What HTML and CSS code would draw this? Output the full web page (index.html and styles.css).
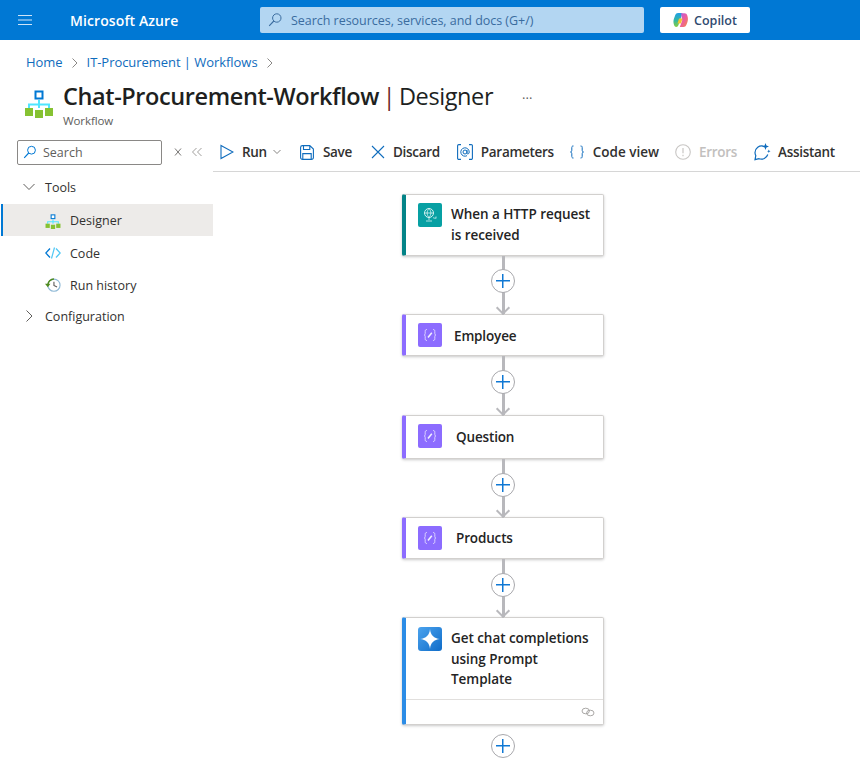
FILE: index.html
```html
<!DOCTYPE html>
<html lang="en">
<head>
<meta charset="utf-8">
<title>Chat-Procurement-Workflow | Designer</title>
<link rel="stylesheet" href="styles.css">
</head>
<body>
<svg class="defs" width="0" height="0" aria-hidden="true">
  <defs>
    <linearGradient id="cpA" x1="0" y1="0" x2="0" y2="1"><stop offset="0" stop-color="#1f9fe8"/><stop offset=".55" stop-color="#35b8a0"/><stop offset="1" stop-color="#8ccf3e"/></linearGradient>
    <linearGradient id="cpB" x1="0" y1="0" x2="1" y2="1"><stop offset="0" stop-color="#b45be6"/><stop offset=".5" stop-color="#ec5f9c"/><stop offset="1" stop-color="#f58a3c"/></linearGradient>
    <symbol id="varicon" viewBox="0 0 16 16">
      <path d="M5 2.500c-1.500 0-1.800.7-1.800 1.800v1.900C3.200 7.200 2.800 8 2 8c.8 0 1.200.8 1.200 1.800v1.900c0 1.100.3 1.800 1.800 1.800M11 2.500c1.500 0 1.800.7 1.800 1.800v1.900c0 1 .4 1.800 1.200 1.800-.8 0-1.200.8-1.200 1.800v1.900c0 1.100-.3 1.800-1.800 1.800" fill="none" stroke="#e2dbff" stroke-width=".9"/>
      <path d="M6 10.500 9.800 5.800" fill="none" stroke="#f4f1ff" stroke-width="1.500"/>
    </symbol>
    <symbol id="flowicon" viewBox="0 0 30 30">
      <path d="M15 12v8M5 20v-3.500h20V20" fill="none" stroke="#50e6ff" stroke-width="2"/>
      <rect x="11.500" y="3.500" width="7" height="7" fill="#fff" stroke="#0078d4" stroke-width="2"/>
      <rect x="1" y="20" width="8" height="8" fill="#86c232"/>
      <rect x="11" y="22" width="8" height="8" fill="#86c232"/>
      <rect x="21" y="20" width="8" height="8" fill="#86c232"/>
    </symbol>
  </defs>
</svg>
<header class="topbar">
  <svg class="hamburger" width="16" height="12" viewBox="0 0 16 12"><path d="M1 1.500h14M1 6h14M1 10.500h14" stroke="#cfe4f7" stroke-width="1.200" fill="none"/></svg>
  <div class="brand">Microsoft Azure</div>
  <div class="globalsearch">
    <svg width="16" height="16" viewBox="0 0 16 16"><circle cx="9.800" cy="6" r="4.200" fill="none" stroke="#3a6c9f" stroke-width="1"/><path d="M6.800 9 2.200 13.800" stroke="#3a6c9f" stroke-width="1.100"/></svg>
    <span>Search resources, services, and docs (G+/)</span>
  </div>
  <button class="copilot">
    <svg width="16" height="16" viewBox="0 0 16 16">
      <path d="M5 1h4.500L7 8.500 5.500 13c-.4 1.300-1.200 2-2.300 2C2 15 1.300 14 .9 12.500.3 10.500.3 8.500 1 6.500L2.300 3C2.800 1.700 3.700 1 5 1Z" fill="url(#cpA)"/>
      <path d="M8 1.200h3.500c1.500 0 2.300.8 2.800 2.200.8 2.500.9 4.700 0 7l-1 2.700c-.5 1.300-1.400 1.900-2.800 1.900H6.800L9.200 8.500Z" fill="url(#cpB)"/>
      <path d="M6 6.500h3.500L8 11.500H4.500Z" fill="#f4c430"/>
    </svg>
    <span>Copilot</span>
  </button>
</header>

<nav class="breadcrumb">
  <a>Home</a>
  <svg width="8" height="12" viewBox="0 0 8 12"><path d="M1.500 1.500 6 6l-4.500 4.500" fill="none" stroke="#8a8886" stroke-width="1"/></svg>
  <a>IT-Procurement | Workflows</a>
  <svg width="8" height="12" viewBox="0 0 8 12"><path d="M1.500 1.500 6 6l-4.500 4.500" fill="none" stroke="#8a8886" stroke-width="1"/></svg>
</nav>

<section class="pagehead">
  <svg class="pageicon" width="30" height="30"><use href="#flowicon"/></svg>
  <div class="pagetitles">
    <h1 class="title"><b>Chat-Procurement-Workflow</b> <i>|</i> Designer</h1>
    <div class="subtitle">Workflow</div>
  </div>
  <div class="more">···</div>
</section>

<div class="workspace">
  <aside class="sidebar">
    <div class="sidetools">
      <div class="sidesearch">
        <svg width="14" height="14" viewBox="0 0 14 14"><circle cx="8.500" cy="5.200" r="3.900" fill="none" stroke="#0078d4" stroke-width="1"/><path d="M5.700 8 1.200 12.800" stroke="#0078d4" stroke-width="1.100"/></svg>
        <span>Search</span>
      </div>
      <svg class="sideicon-x" width="10" height="10" viewBox="0 0 10 10"><path d="M2 1.500 8 8.500M8 1.500 2 8.500" stroke="#797775" stroke-width="1" fill="none"/></svg>
      <svg class="sideicon-c" width="12" height="10" viewBox="0 0 12 10"><path d="M5.500 1 1.500 5l4 4M10.500 1l-4 4 4 4" stroke="#a19f9d" stroke-width="1" fill="none"/></svg>
    </div>
    <div class="navgroup tools">
      <svg width="14" height="14" viewBox="0 0 14 14"><path d="M1.500 4 7 9.500 12.500 4" fill="none" stroke="#605e5c" stroke-width="1"/></svg>
      <span>Tools</span>
    </div>
    <div class="navitem active">
      <svg width="16" height="16"><use href="#flowicon"/></svg>
      <span>Designer</span>
    </div>
    <div class="navitem">
      <svg width="16" height="16" viewBox="0 0 16 16"><path d="M5 3.500.8 8 5 12.500" fill="none" stroke="#0078d4" stroke-width="1.300"/><path d="M11 3.500 15.200 8 11 12.500" fill="none" stroke="#50c8f5" stroke-width="1.300"/><path d="M9.500 2.500 6.500 13.500" fill="none" stroke="#50c8f5" stroke-width="1.200"/></svg>
      <span>Code</span>
    </div>
    <div class="navitem">
      <svg width="16" height="16" viewBox="0 0 17 16"><circle cx="9.500" cy="8.200" r="6.500" fill="#fff" stroke="#8fb9d6" stroke-width="1.200"/><path d="M3 8A6.500 6.500 0 0 1 9.500 1.700" fill="none" stroke="#4f8a1e" stroke-width="1.600"/><path d="M9.500 4.500v4l3.300 1.700" fill="none" stroke="#605e5c" stroke-width="1.200"/><path d="M0 6.800h5.800L3 10.300Z" fill="#4f8a1e"/></svg>
      <span>Run history</span>
    </div>
    <div class="navgroup config">
      <svg width="14" height="14" viewBox="0 0 14 14"><path d="M4.500 1.500 10 7l-5.500 5.500" fill="none" stroke="#605e5c" stroke-width="1"/></svg>
      <span>Configuration</span>
    </div>
  </aside>

  <main class="main">
    <div class="toolbar">
      <div class="tool t-run">
        <svg width="14" height="16" viewBox="0 0 14 16"><path d="M1 1.500 13 8 1 14.500Z" fill="none" stroke="#0f6cbd" stroke-width="1.100"/></svg>
        <span>Run</span>
        <svg class="caret" width="8" height="6" viewBox="0 0 8 6"><path d="M.5 1 4 4.500 7.500 1" fill="none" stroke="#797775" stroke-width=".9"/></svg>
      </div>
      <div class="tool t-save">
        <svg width="14" height="15" viewBox="0 0 14 15"><path d="M.6 2.500A1.900 1.900 0 0 1 2.500.6h7.300L13.400 4v8.500a1.900 1.900 0 0 1-1.900 1.900h-9A1.900 1.900 0 0 1 .6 12.500ZM3.500.8v3.700h6.300V.8M2.800 14.300V8.600h8.400v5.700" fill="none" stroke="#0f6cbd" stroke-width="1.100"/></svg>
        <span>Save</span>
      </div>
      <div class="tool t-discard">
        <svg width="14" height="14" viewBox="0 0 14 14"><path d="M1 1 13 13M13 1 1 13" fill="none" stroke="#0f6cbd" stroke-width="1.100"/></svg>
        <span>Discard</span>
      </div>
      <div class="tool t-params">
        <svg width="16" height="16" viewBox="0 0 16 16"><path d="M4 .6H1.800A1.200 1.200 0 0 0 .6 1.800v12.400a1.200 1.200 0 0 0 1.200 1.200H4M12 .6h2.200a1.200 1.200 0 0 1 1.200 1.200v12.400a1.200 1.200 0 0 1-1.200 1.200H12" fill="none" stroke="#0f6cbd" stroke-width="1.100"/><circle cx="8" cy="8" r="2" fill="none" stroke="#0f6cbd"/><path d="M10 6v3c0 1.500 2.200 1.300 2.200-1A4.200 4.200 0 1 0 10 11.700" fill="none" stroke="#0f6cbd"/></svg>
        <span>Parameters</span>
      </div>
      <div class="tool t-code">
        <svg width="14" height="16" viewBox="0 0 14 14"><path d="M3.500 1H3C2 1 1.800 1.800 1.800 2.500v2.700C1.800 6.200 1.300 7 .5 7c.8 0 1.300.8 1.300 1.800v2.700c0 .7.200 1.500 1.200 1.500h.5M10.500 1h.5c1 0 1.200.8 1.200 1.500v2.700c0 1 .5 1.800 1.300 1.800-.8 0-1.300.8-1.300 1.800v2.700c0 .7-.2 1.500-1.200 1.500h-.5" fill="none" stroke="#0f6cbd" stroke-width="1"/></svg>
        <span>Code view</span>
      </div>
      <div class="tool disabled">
        <svg width="16" height="16" viewBox="0 0 16 16"><circle cx="8" cy="8" r="7.300" fill="none" stroke="#c8c6c4" stroke-width="1.100"/><path d="M8 4v5.300M8 10.800v1.500" fill="none" stroke="#c8c6c4" stroke-width="1.200"/></svg>
        <span>Errors</span>
      </div>
      <div class="tool t-assist">
        <svg width="18" height="18" viewBox="0 0 18 18"><path d="M10.500 3.200A6.800 6.800 0 0 0 2 9.500c0 1.200.3 2.200.8 3.100l-.8 4 4-.9a6.800 6.800 0 0 0 8.800-4.200" fill="none" stroke="#0f6cbd" stroke-width="1.200"/><path d="M12.500 0l.9 2.600 2.600.9-2.600.9-.9 2.600-.9-2.600-2.600-.9 2.600-.9Z" fill="#0f6cbd"/><path d="M15.800 6.500l.5 1.200 1.200.5-1.200.5-.5 1.200-.5-1.200-1.200-.5 1.200-.5Z" fill="#0f6cbd"/></svg>
        <span>Assistant</span>
      </div>
    </div>

    <div class="canvas">
      <div class="flow">
        <article class="card teal h62">
          <div class="ico"><svg width="16" height="16" viewBox="0 0 16 16"><circle cx="7" cy="6" r="4.500" fill="none" stroke="#d8f2f2" stroke-width="1"/><path d="M2.500 6h9M7 1.500c-2.500 3-2.500 6 0 9M7 1.500c2.500 3 2.500 6 0 9M7 10.500V13M4 14h6" fill="none" stroke="#d8f2f2" stroke-width=".8"/><path d="M11 10.500c1 .8 2 .8 3 .5M14 9.500v2" fill="none" stroke="#d8f2f2" stroke-width=".8"/></svg></div>
          <div class="label two">When a HTTP request is received</div>
        </article>
        <div class="link g58"><span class="add"></span><span class="arrow"></span></div>
        <article class="card violet h42">
          <div class="ico"><svg width="16" height="16"><use href="#varicon"/></svg></div>
          <div class="label e">Employee</div>
        </article>
        <div class="link g59"><span class="add"></span><span class="arrow"></span></div>
        <article class="card violet h44">
          <div class="ico"><svg width="16" height="16"><use href="#varicon"/></svg></div>
          <div class="label q">Question</div>
        </article>
        <div class="link g58 low"><span class="add"></span><span class="arrow"></span></div>
        <article class="card violet h42">
          <div class="ico"><svg width="16" height="16"><use href="#varicon"/></svg></div>
          <div class="label q">Products</div>
        </article>
        <div class="link g58 low"><span class="add"></span><span class="arrow"></span></div>
        <article class="card blue">
          <div class="cardtop">
            <div class="ico ai"><svg width="20" height="20" viewBox="0 0 20 20"><path d="M10 0C10.500 6 14 9.500 20 10 14 10.500 10.500 14 10 20 9.500 14 6 10.500 0 10 6 9.500 9.500 6 10 0Z" fill="#fff"/></svg></div>
            <div class="label three">Get chat completions using Prompt Template</div>
          </div>
          <div class="cardfoot">
            <svg width="14" height="10" viewBox="0 0 14 10"><ellipse cx="4.700" cy="4" rx="3.700" ry="2.800" fill="none" stroke="#a19f9d" stroke-width=".9"/><ellipse cx="9.300" cy="6" rx="3.700" ry="2.800" fill="none" stroke="#a19f9d" stroke-width=".9"/></svg>
          </div>
        </article>
        <div class="link last"><span class="add"></span></div>
      </div>
    </div>
  </main>
</div>
</body>
</html>
```
FILE: styles.css
```css
* { box-sizing: border-box; }
html, body { margin: 0; height: 780px; overflow: hidden; background: #fff; }
body { font-family: "Open Sans", "Noto Sans", sans-serif; color: #323130; font-size: 13px; }
svg { display: block; flex: none; }
.defs { position: absolute; }

.topbar { height: 40px; background: #0078d4; display: flex; align-items: center; }
.hamburger { margin-left: 17px; }
.brand { margin-left: 37px; width: 190px; color: #fff; font-weight: 600; font-size: 14px; letter-spacing: .1px; }
.globalsearch { width: 384px; height: 26px; background: #b3d6f2; border-radius: 2px; display: flex; align-items: center; padding-left: 7px; gap: 8px; color: #3a6c9f; font-size: 12.500px; letter-spacing: -.03px; }
.copilot { margin-left: 16px; width: 90px; height: 26px; border: 0; border-radius: 2px; background: #fff; display: flex; align-items: center; justify-content: center; gap: 5px; color: #2f4a70; font: 600 12.500px "Open Sans", sans-serif; }

.breadcrumb { height: 44px; padding: 0 0 0 26px; display: flex; align-items: center; gap: 8px; font-size: 13px; color: #0f6cbd; letter-spacing: -.05px; }
.breadcrumb svg { margin-top: 1px; }

.pagehead { height: 53px; display: flex; padding-left: 24px; margin-top: -4px; }
.pageicon { margin-top: 8px; }
.pagetitles { margin-left: 9px; }
.title { margin: 0; font-size: 23.500px; line-height: 32px; font-weight: 400; color: #201f1e; letter-spacing: -.4px; word-spacing: -2px; white-space: nowrap; }
.title b { font-weight: 600; }
.title i { font-style: normal; color: #6b2a2a; }
.subtitle { font-size: 11.500px; line-height: 14px; margin-top: 2px; color: #605e5c; letter-spacing: -.1px; }
.more { margin: 9px 0 0 29px; font-size: 13px; color: #605e5c; }

.workspace { display: flex; height: 643px; }
.sidebar { width: 213px; flex: none; }
.sidetools { height: 38px; display: flex; align-items: center; padding-left: 17px; }
.sidesearch { width: 145px; height: 25px; border: 1px solid #8a8886; border-radius: 2px; display: flex; align-items: center; gap: 6px; padding-left: 5px; color: #605e5c; font-size: 12.500px; }
.sideicon-x { margin-left: 11px; }
.sideicon-c { margin-left: 8px; }
.navgroup { height: 32px; display: flex; align-items: center; padding-left: 22px; gap: 9px; font-size: 12.500px; }
.navgroup.tools { margin-bottom: 1px; }
.navitem { height: 32px; display: flex; align-items: center; padding-left: 45px; gap: 9px; margin-left: 1px; font-size: 12.500px; }
.navitem svg { margin-left: -1px; }
.navitem.active { background: #edebe9; border-left: 2px solid #0078d4; padding-left: 43px; padding-top: 1px; margin-bottom: 1px; }
.navgroup.config { margin-top: -1px; }

.main { flex: 1; min-width: 0; }
.toolbar { height: 39px; padding-left: 7px; display: flex; align-items: center; border-bottom: 1px solid #d6d6d6; white-space: nowrap; }
.tool { display: flex; align-items: center; gap: 8px; margin-right: 16px; font-weight: 600; font-size: 13.500px; color: #323130; letter-spacing: -.3px; }
.t-run { margin-right: 19px; }
.t-save { gap: 9px; margin-right: 19px; }
.t-discard { margin-right: 17px; }
.t-code { gap: 9px; letter-spacing: 0; }
.t-assist { gap: 7px; }
.tool.disabled { color: #c2c0be; }
.caret { margin-left: -2px; }

.canvas { padding: 22px 0 0 189px; }
.flow { width: 202px; display: flex; flex-direction: column; }
.card { display: flex; background: #fff; border: 1px solid #d2d0ce; border-left-width: 4px; border-radius: 2px; box-shadow: 0 1px 3px rgba(0,0,0,.22); padding: 8px 12px 0 12px; }
.card.teal { border-left-color: #038387; }
.card.violet { border-left-color: #8c6cff; }
.card.blue { border-left-color: #2b8ce6; display: block; padding: 0; }
.h62 { height: 62px; }
.h42 { height: 42px; }
.h44 { height: 44px; }
.ico { width: 24px; height: 24px; flex: none; border-radius: 2px; background: #8c6cff; display: flex; align-items: center; justify-content: center; }
.teal .ico { background: #07a0a3; }
.ico.ai { background: linear-gradient(135deg, #4ba3ee, #0f6cc8); border-radius: 3px; }
.label { font-weight: 600; font-size: 13.500px; line-height: 21px; color: #242424; letter-spacing: -.05px; }
.label.two { margin: 1px 0 0 9px; }
.label.e { margin: 3px 0 0 12px; letter-spacing: -.15px; }
.label.q { margin: 2px 0 0 14px; letter-spacing: -.15px; }
.h44 .label.q { margin-top: 3px; }
.cardtop { display: flex; padding: 9px 8px 0 12px; height: 81px; }
.label.three { margin: 1px 0 0 9px; line-height: 20.500px; }
.cardfoot { height: 25px; border-top: 1px solid #e1dfdd; display: flex; justify-content: flex-end; align-items: center; padding-right: 8px; }

.link { position: relative; align-self: center; width: 24px; display: flex; flex-direction: column; }
.link::before { content: ""; width: 3px; margin: 0 auto; flex: 1; background: #b8b8bc; }
.g58 { height: 58px; }
.g59 { height: 59px; }
.link.last { height: 42px; }
.link.last::before { display: none; }
.add { position: absolute; left: 0; top: 13px; width: 24px; height: 24px; border: 1px solid #a8a8ac; border-radius: 50%; background-color: #fff; background-image: linear-gradient(#0f78d4, #0f78d4), linear-gradient(#0f78d4, #0f78d4); background-size: 14px 1.500px, 1.500px 14px; background-position: center; background-repeat: no-repeat; }
.g59 .add, .low .add { top: 14px; }
.last .add { top: 9px; }
.arrow { position: absolute; left: 7px; bottom: 1px; width: 10px; height: 10px; border-right: 2px solid #b8b8bc; border-bottom: 2px solid #b8b8bc; transform: rotate(45deg); }
```
